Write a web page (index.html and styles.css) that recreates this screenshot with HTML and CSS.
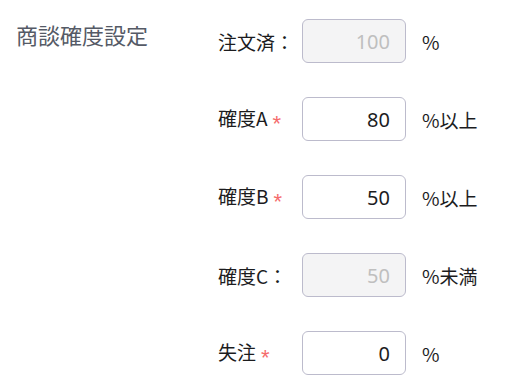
FILE: index.html
```html
<!DOCTYPE HTML>
<html lang="ja">
<head>
  <title>商談確度設定</title>
  <meta charset="utf-8">
  <link rel="stylesheet" href="styles.css">
</head>
<body>

<div class="setting">
  <div class="setting-title">商談確度設定</div>

  <div class="setting-form">
    <div class="row">
      <span class="label">注文済：</span>
      <input class="num" type="text" value="100" disabled>
      <span class="unit">%</span>
    </div>
    <div class="row">
      <span class="label">確度A<span class="req">*</span></span>
      <input class="num" type="text" value="80">
      <span class="unit">%以上</span>
    </div>
    <div class="row">
      <span class="label">確度B<span class="req">*</span></span>
      <input class="num" type="text" value="50">
      <span class="unit">%以上</span>
    </div>
    <div class="row">
      <span class="label">確度C：</span>
      <input class="num" type="text" value="50" disabled>
      <span class="unit">%未満</span>
    </div>
    <div class="row">
      <span class="label">失注<span class="req">*</span></span>
      <input class="num" type="text" value="0">
      <span class="unit">%</span>
    </div>
  </div>
</div>

</body>
</html>
```

FILE: styles.css
```css
html {
  height: 100%;
}
body {
  margin: 0;
  padding: 0;
  background: #ffffff;
  color: #1c1c1e;
  font-family: "Noto Sans CJK JP", "Noto Sans", sans-serif;
  height: 100%;
}

.setting {
  display: flex;
  padding: 19px 0 0 16px;
}

.setting-title {
  width: 202px;
  font-size: 22px;
  line-height: 30px;
  color: #555a66;
}

.setting-form {
  display: flex;
  flex-direction: column;
  gap: 34px;
}

.row {
  display: flex;
  align-items: center;
  height: 44px;
}

.label {
  width: 84px;
  font-size: 19px;
  white-space: nowrap;
}

.req {
  color: #f56c6c;
  font-family: "Liberation Sans", sans-serif;
  font-size: 22px;
  line-height: 1;
  vertical-align: -5px;
  margin-left: 5px;
}

.num {
  box-sizing: border-box;
  width: 104px;
  height: 44px;
  padding: 0 15px;
  border: 1px solid #bcbbcc;
  border-radius: 6px;
  background: #fff;
  color: #1c1c1e;
  font-family: "Noto Sans", sans-serif;
  font-size: 20px;
  text-align: right;
  outline: none;
}

.num:disabled {
  background: #f4f4f5;
  color: #bfbfbf;
}

.unit {
  margin-left: 16px;
  font-size: 19px;
}
```
